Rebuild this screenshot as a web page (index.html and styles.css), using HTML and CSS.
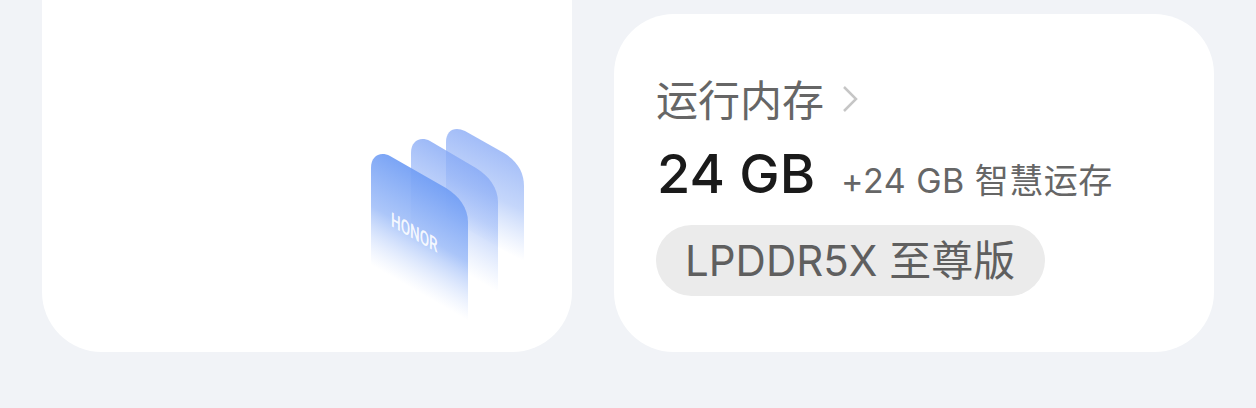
FILE: index.html
```html
<!DOCTYPE html>
<html lang="zh-CN">
<head>
    <meta charset="UTF-8">
    <title>运行内存</title>
    <link rel="stylesheet" href="styles.css">
</head>
<body>
    <div class="cards">
        <div class="card card-art">
            <svg class="stack" width="175" height="210" viewBox="360 120 175 210">
                <defs>
                    <linearGradient id="fade-back" gradientUnits="userSpaceOnUse" x1="495" y1="140" x2="447" y2="245">
                        <stop offset="0" stop-color="#8dadf6" stop-opacity="0.85"/>
                        <stop offset="0.45" stop-color="#a5c0f8" stop-opacity="0.65"/>
                        <stop offset="0.85" stop-color="#b6cdfa" stop-opacity="0"/>
                    </linearGradient>
                    <linearGradient id="fade-mid" gradientUnits="userSpaceOnUse" x1="468" y1="150" x2="414" y2="244">
                        <stop offset="0" stop-color="#7fa4f5" stop-opacity="0.85"/>
                        <stop offset="0.5" stop-color="#a0bcf8" stop-opacity="0.65"/>
                        <stop offset="1" stop-color="#b6cdfa" stop-opacity="0"/>
                    </linearGradient>
                    <linearGradient id="fade-front" gradientUnits="userSpaceOnUse" x1="435" y1="170" x2="378" y2="269">
                        <stop offset="0" stop-color="#6a99f4" stop-opacity="0.95"/>
                        <stop offset="0.55" stop-color="#9dbcf8" stop-opacity="0.85"/>
                        <stop offset="1" stop-color="#c4d6fb" stop-opacity="0"/>
                    </linearGradient>
                </defs>
                <path d="M446 142C446 130 455 126 465 131L504 153C517 161 524 172 524 186L524 262L446 217Z" fill="url(#fade-back)"/>
                <path d="M411 153C411 141 420 136 430 141L476 168C489 176 498 188 498 202L498 292L411 242Z" fill="url(#fade-mid)"/>
                <path d="M371 168C371 156 380 151 390 156L446 188C459 196 468 208 468 222L468 324L371 268Z" fill="url(#fade-front)"/>
                <text class="stack-logo" transform="translate(391 226) skewY(30) scale(0.68 1)">HONOR</text>
            </svg>
        </div>
        <div class="card card-ram">
            <div class="ram-title">
                <span>运行内存</span>
                <svg class="chevron" width="16" height="28" viewBox="0 0 16 28">
                    <path d="M2 2L14 14L2 26" fill="none" stroke="#c6c6c6" stroke-width="2.5"/>
                </svg>
            </div>
            <div class="ram-size">
                <span class="ram-value">24 GB</span>
                <span class="ram-extra">+24 GB 智慧运存</span>
            </div>
            <span class="ram-pill">LPDDR5X 至尊版</span>
        </div>
    </div>
</body>
</html>
```

FILE: styles.css
```css
body {
    margin: 0;
    height: 408px;
    overflow: hidden;
    background-color: #f1f3f7;
    font-family: Inter, "Noto Sans CJK SC", sans-serif;
}

.cards {
    display: flex;
    align-items: flex-end;
    gap: 42px;
    height: 352px;
    padding: 0 42px;
}

.card {
    background-color: #fff;
    border-radius: 60px;
}

.card-art {
    display: flex;
    justify-content: flex-end;
    align-items: flex-end;
    width: 530px;
    height: 412px;
    flex: none;
    box-sizing: border-box;
    padding: 0 37px 22px 0;
}

.stack-logo {
    font-family: Roboto, sans-serif;
    font-size: 20px;
    font-weight: 500;
    fill: #fff;
    fill-opacity: 0.9;
}

.card-ram {
    width: 600px;
    height: 338px;
    flex: none;
    box-sizing: border-box;
    padding: 57px 42px 0;
}

.ram-title {
    display: flex;
    align-items: center;
    gap: 18px;
    height: 52px;
    font-size: 42px;
    color: #666;
}

.ram-title .chevron {
    margin-top: 4px;
}

.ram-size {
    display: flex;
    align-items: baseline;
    gap: 26px;
    margin-top: 18px;
    padding-left: 1px;
}

.ram-value {
    font-size: 54px;
    font-weight: 500;
    color: #1a1a1a;
}

.ram-extra {
    font-size: 34px;
    letter-spacing: 0.5px;
    color: #666;
}

.ram-pill {
    display: inline-block;
    margin-top: 19px;
    padding: 0 30px 0 29px;
    height: 71px;
    line-height: 71px;
    border-radius: 36px;
    background-color: #ebebeb;
    font-size: 42px;
    color: #5f5f5f;
}
```
